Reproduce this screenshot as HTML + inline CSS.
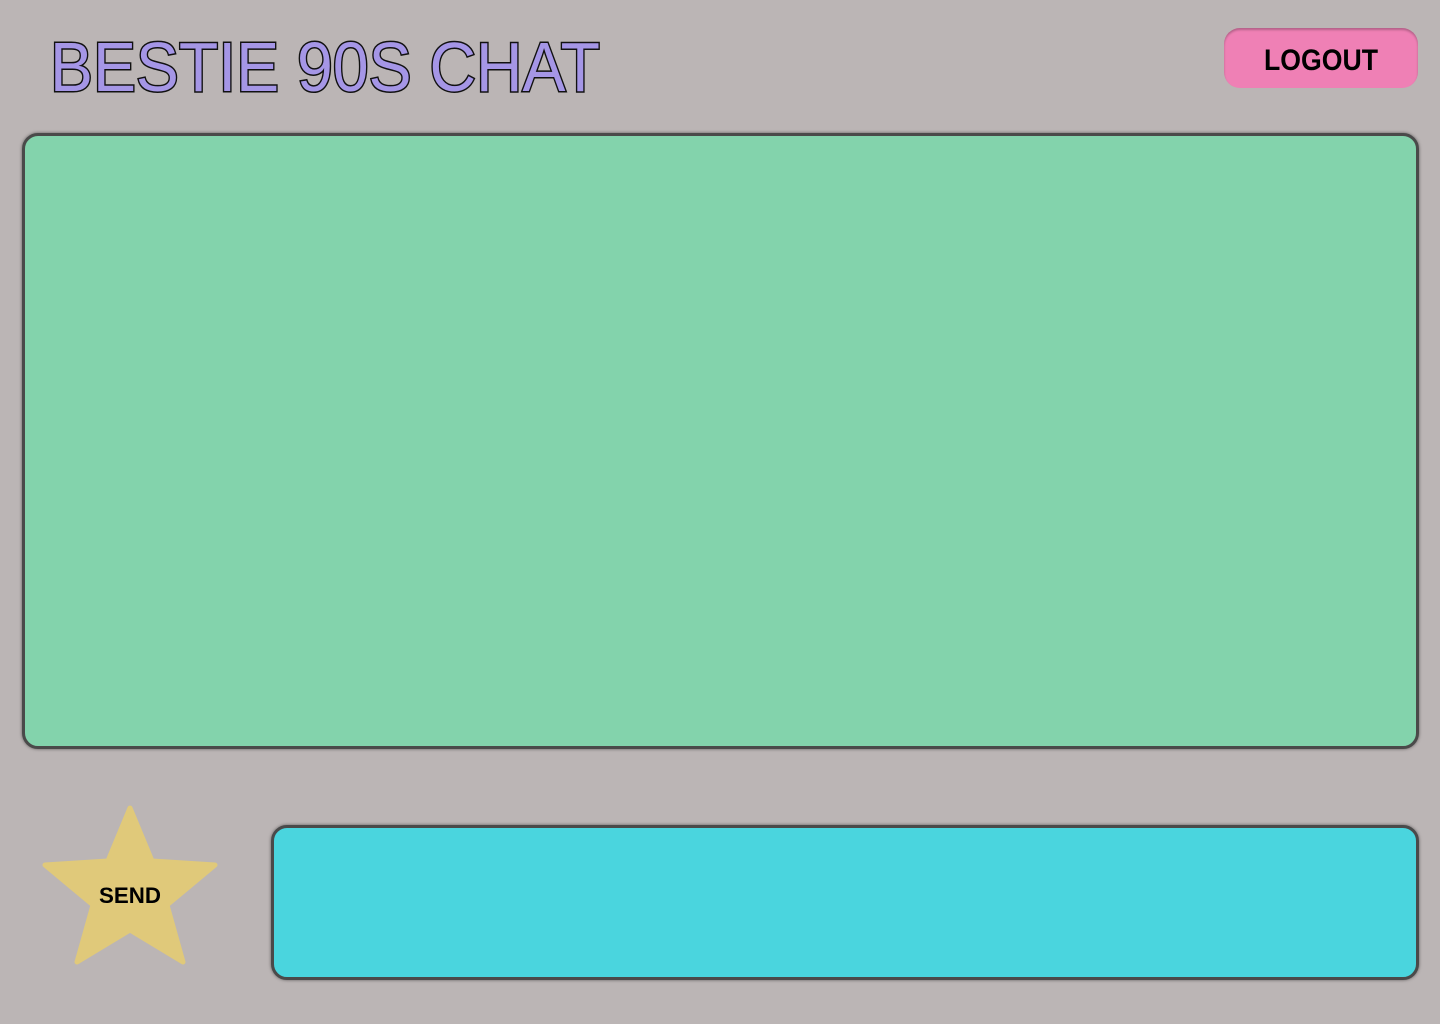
<!DOCTYPE html>
<html><head><meta charset="utf-8"><style>
html,body{margin:0;padding:0}
body{width:1440px;height:1024px;background:#bbb5b5;position:relative;overflow:hidden;font-family:"Liberation Sans",sans-serif}
.box{position:absolute;border:3px solid #4a4a4a;border-radius:16px;box-sizing:border-box;box-shadow:0 0 3px rgba(0,0,0,.5)}
</style></head><body>
<svg style="position:absolute;left:0;top:0" width="1440" height="130">
<text x="50" y="91" font-family="Liberation Sans" font-size="70" fill="#a596e6" stroke="#111" stroke-width="3" paint-order="stroke" textLength="550" lengthAdjust="spacingAndGlyphs">BESTIE 90S CHAT</text>
</svg>
<div style="position:absolute;left:1224px;top:28px;width:194px;height:60px;background:#ef80b5;border-radius:16px;box-shadow:inset 0 2px 2px rgba(0,0,0,.25)"></div>
<svg style="position:absolute;left:1224px;top:28px" width="194" height="60"><text x="97" y="42" text-anchor="middle" font-family="Liberation Sans" font-weight="bold" font-size="30" fill="#000" textLength="114" lengthAdjust="spacingAndGlyphs">LOGOUT</text></svg>
<div class="box" style="left:22px;top:133px;width:1397px;height:616px;background:#83d3ac"></div>
<div class="box" style="left:271px;top:825px;width:1148px;height:155px;background:#4ad5de"></div>
<svg style="position:absolute;left:0;top:790px" width="260" height="200">
<polygon points="130,18 152,71 215,75 167,115 183,172 130,140 77,172 93,115 45,75 108,71" fill="#e0c97a" stroke="#e0c97a" stroke-width="5" stroke-linejoin="round"/>
<text x="130" y="113" text-anchor="middle" font-family="Liberation Sans" font-weight="bold" font-size="22" fill="#000" textLength="62" lengthAdjust="spacingAndGlyphs">SEND</text>
</svg>
</body></html>
